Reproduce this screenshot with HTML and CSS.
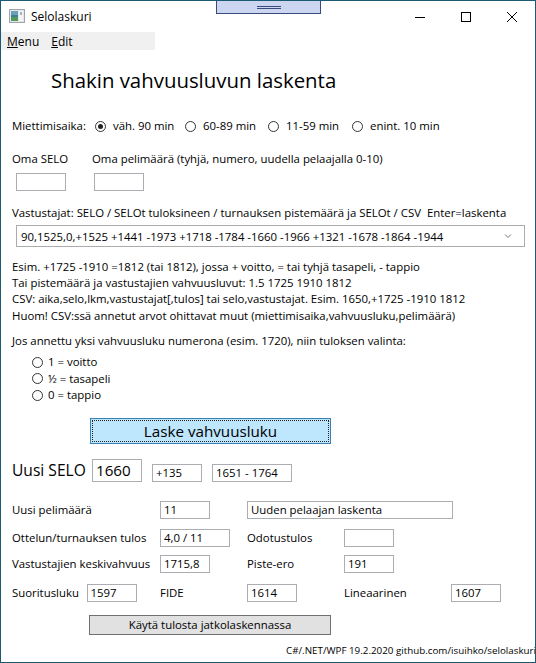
FILE: index.html
```html
<!DOCTYPE html>
<html lang="fi">
<head>
<meta charset="utf-8">
<title>Selolaskuri</title>
<link rel="stylesheet" href="styles.css">
</head>
<body>
<div class="window">
  <div class="dragbar"><i></i><i></i></div>
  <header class="titlebar">
    <svg class="appicon" width="16" height="14" viewBox="0 0 16 14">
      <rect x="0.5" y="0.5" width="15" height="13" fill="#e4e8ea" stroke="#a0a4a8"/>
      <rect x="2" y="2" width="7" height="10" fill="#3d7f8f"/>
      <rect x="2" y="2" width="7" height="4" fill="#6a9fb8"/>
      <rect x="2" y="8" width="7" height="4" fill="#4f9a5a"/>
      <rect x="10" y="2" width="4" height="10" fill="#f2f4f5"/>
      <rect x="11" y="3" width="2" height="3" fill="#9bb7c7"/>
    </svg>
    <span class="apptitle">Selolaskuri</span>
    <div class="controls">
      <svg width="46" height="30" viewBox="0 0 46 30"><line x1="18" y1="15.5" x2="28" y2="15.5" stroke="#000" stroke-width="1"/></svg>
      <svg width="46" height="30" viewBox="0 0 46 30"><rect x="18.5" y="10.5" width="9" height="9" fill="none" stroke="#000" stroke-width="1"/></svg>
      <svg width="46" height="30" viewBox="0 0 46 30"><path d="M18 10 L28 20 M28 10 L18 20" stroke="#000" stroke-width="1"/></svg>
    </div>
  </header>
  <nav class="menubar"><span><u>M</u>enu</span><span><u>E</u>dit</span></nav>

  <main class="content">
    <h1 class="heading">Shakin vahvuusluvun laskenta</h1>

    <div class="row time">
      <span class="label">Miettimisaika:</span>
      <span class="radio r1"><span class="dot on"></span>väh. 90 min</span>
      <span class="radio r2"><span class="dot"></span>60-89 min</span>
      <span class="radio r3"><span class="dot"></span>11-59 min</span>
      <span class="radio r4"><span class="dot"></span>enint. 10 min</span>
    </div>

    <div class="row own-labels">
      <span class="own1">Oma SELO</span>
      <span>Oma pelimäärä (tyhjä, numero, uudella pelaajalla 0-10)</span>
    </div>
    <div class="row own-inputs">
      <span class="box w50"></span>
      <span class="box w50 own2"></span>
    </div>

    <div class="row vast">Vastustajat: SELO / SELOt tuloksineen / turnauksen pistemäärä ja SELOt / CSV&nbsp; Enter=laskenta</div>
    <div class="combo">
      <span>90,1525,0,+1525 +1441 -1973 +1718 -1784 -1660 -1966 +1321 -1678 -1864 -1944</span>
      <svg class="chev" width="8" height="6" viewBox="0 0 8 6"><path d="M1 1.5 L4 4.5 L7 1.5" fill="none" stroke="#777" stroke-width="1"/></svg>
    </div>

    <div class="help">
      <div>Esim. +1725 -1910 =1812 (tai 1812), jossa + voitto, = tai tyhjä tasapeli, - tappio</div>
      <div>Tai pistemäärä ja vastustajien vahvuusluvut: 1.5 1725 1910 1812</div>
      <div>CSV: aika,selo,lkm,vastustajat[,tulos] tai selo,vastustajat. Esim. 1650,+1725 -1910 1812</div>
      <div>Huom! CSV:ssä annetut arvot ohittavat muut (miettimisaika,vahvuusluku,pelimäärä)</div>
    </div>

    <div class="row jos">Jos annettu yksi vahvuusluku numerona (esim. 1720), niin tuloksen valinta:</div>
    <div class="results">
      <div class="radio"><span class="dot"></span>1 = voitto</div>
      <div class="radio"><span class="dot"></span>½ = tasapeli</div>
      <div class="radio"><span class="dot"></span>0 = tappio</div>
    </div>

    <button class="btn-primary" type="button"><span>Laske vahvuusluku</span></button>

    <div class="row newselo">
      <span class="big-label">Uusi SELO</span>
      <span class="box big">1660</span>
      <span class="box w50 diff">+135</span>
      <span class="box range">1651 - 1764</span>
    </div>

    <div class="grid4 g1">
      <span>Uusi pelimäärä</span>
      <span class="box w50">11</span>
      <span class="box wide">Uuden pelaajan laskenta</span>
    </div>
    <div class="grid4 g2">
      <span>Ottelun/turnauksen tulos</span>
      <span class="box w70">4,0 / 11</span>
      <span>Odotustulos</span>
      <span class="box w50"></span>
    </div>
    <div class="grid4 g3">
      <span>Vastustajien keskivahvuus</span>
      <span class="box w50">1715,8</span>
      <span>Piste-ero</span>
      <span class="box w50">191</span>
    </div>
    <div class="grid5">
      <span>Suoritusluku</span>
      <span class="box w50">1597</span>
      <span>FIDE</span>
      <span class="box w50">1614</span>
      <span>Lineaarinen</span>
      <span class="box w50">1607</span>
    </div>

    <button class="btn-secondary" type="button">Käytä tulosta jatkolaskennassa</button>
  </main>
  <footer class="footer">C#/.NET/WPF 19.2.2020 github.com/isuihko/selolaskuri</footer>
</div>
</body>
</html>
```

FILE: styles.css
```css
* { box-sizing: border-box; }
html, body { margin: 0; padding: 0; background: #fff; }
body {
  font-family: "Open Sans", "Noto Sans", sans-serif;
  font-size: 11.4px;
  color: #000;
}
.window {
  position: relative;
  width: 536px;
  height: 663px;
  border: 1px solid #1b5a72;
  overflow: hidden;
  background: #fff;
}
.dragbar {
  position: absolute;
  left: 215px;
  top: -1px;
  width: 105px;
  height: 14px;
  background: #ccd6f0;
  border: 1px solid #3a4a7c;
  display: flex;
  flex-direction: column;
  align-items: center;
  justify-content: center;
  gap: 1px;
}
.dragbar i { display: block; width: 24px; height: 1px; background: #3a4a7c; }
.titlebar {
  height: 31px;
  display: flex;
  align-items: center;
  padding-left: 8px;
}
.appicon { display: block; margin-top: -1px; }
.apptitle { margin-left: 6px; font-size: 12px; margin-top: -1px; }
.controls { margin-left: auto; display: flex; align-items: center; }
.controls svg { display: block; }
.menubar {
  width: 154px;
  height: 18px;
  background: #f0f0f0;
  display: flex;
  align-items: center;
  gap: 12px;
  padding-left: 6px;
  font-size: 12px;
}
.menubar u { text-decoration: underline; }
.content { padding-left: 11px; }
.heading {
  margin: 15px 0 0 39px;
  font-weight: normal;
  font-size: 20.4px;
  line-height: 30px;
  height: 30px;
}
.row { display: flex; align-items: center; height: 16px; line-height: 16px; white-space: nowrap; }
.time { margin-top: 23px; }
.time .label { width: 83px; }
.radio { display: flex; align-items: center; }
.dot {
  width: 11px; height: 11px; border: 1px solid #333; border-radius: 50%;
  display: inline-flex; align-items: center; justify-content: center;
  margin-right: 7px; background: #fff; flex: none;
}
.dot.on::after { content: ""; width: 5px; height: 5px; border-radius: 50%; background: #222; }
.time .r1 { width: 90px; }
.time .r2 { width: 83px; }
.time .r3 { width: 84px; }
.own-labels { margin-top: 17px; }
.own1 { width: 80px; }
.own-inputs { margin-top: 6px; height: 18px; padding-left: 4px; }
.own2 { margin-left: 28px; }
.box {
  display: inline-flex;
  align-items: center;
  height: 18px;
  border: 1px solid #abadb3;
  padding-left: 3px;
  background: #fff;
  white-space: nowrap;
}
.w50 { width: 50px; }
.w70 { width: 70px; }
.wide { width: 206px; }
.vast { margin-top: 14px; }
.combo {
  margin-top: 4px;
  margin-left: 4px;
  width: 509px;
  height: 22px;
  border: 1px solid #acacac;
  display: flex;
  align-items: center;
  padding-left: 4px;
  white-space: nowrap;
}
.chev { margin-left: auto; margin-right: 12px; display: block; }
.help { margin-top: 12px; line-height: 16.2px; white-space: nowrap; }
.jos { margin-top: 9px; }
.results { margin-top: 5px; padding-left: 20px; }
.results .radio { height: 16.7px; line-height: 16.7px; }
.results .dot { margin-right: 5px; }
.btn-primary {
  display: block;
  margin: 14px 0 0 78px;
  width: 241px;
  height: 26px;
  background: #bee6fd;
  border: 1px solid #3c7fb1;
  padding: 1px;
  font-family: inherit;
  font-size: 15.2px;
  color: #000;
}
.btn-primary span {
  display: flex;
  align-items: center;
  justify-content: center;
  height: 100%;
  border: 1px dotted #222;
}
.newselo { margin-top: 15px; height: 23px; align-items: flex-end; }
.big-label { font-size: 15.6px; width: 80px; align-self: center; white-space: nowrap; }
.box.big { width: 50px; height: 23px; font-size: 15.2px; }
.diff { margin-left: 10px; height: 18px; }
.range { margin-left: 10px; width: 80px; height: 18px; }
.grid4 {
  display: grid;
  grid-template-columns: 148px 87px 97px auto;
  align-items: center;
  height: 18px;
  white-space: nowrap;
}
.grid4 .box { justify-self: start; }
.g1 { margin-top: 19px; }
.g2 { margin-top: 10px; }
.g3 { margin-top: 8px; }
.grid5 {
  display: grid;
  grid-template-columns: 74.5px 73.5px 87px 97px 107px auto;
  align-items: center;
  height: 18px;
  margin-top: 11px;
  white-space: nowrap;
}
.btn-secondary {
  display: block;
  margin: 13px 0 0 77px;
  width: 242px;
  height: 20px;
  background: #e1e1e1;
  border: 1px solid #707070;
  font-family: inherit;
  font-size: 11.4px;
  color: #000;
  padding: 0;
}
.footer {
  margin-top: 9px;
  padding-left: 285px;
  font-size: 9.8px;
  line-height: 14px;
  white-space: nowrap;
}
```
